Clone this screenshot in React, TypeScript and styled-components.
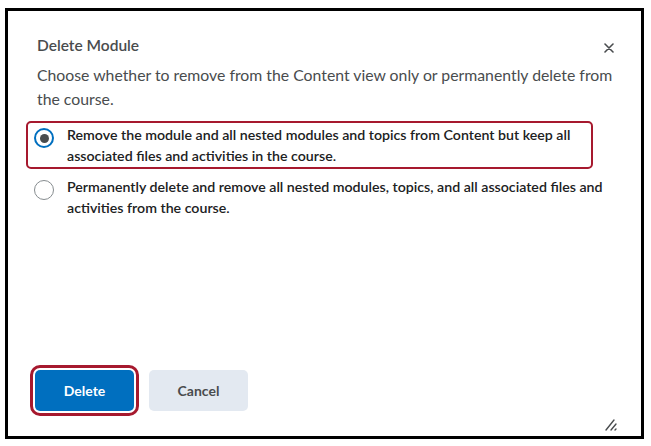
import styled, { createGlobalStyle } from 'styled-components';
import { useState } from 'react';

const GlobalStyle = createGlobalStyle`
    html, body {
        margin: 0;
        padding: 0;
        background: #ffffff;
    }
    body {
        font-family: Lato, "Noto Sans", sans-serif;
    }
`;

const Frame = styled.div`
    box-sizing: border-box;
    width: 639px;
    height: 431px;
    margin: 8px 0 0 5px;
    border: 3px solid #000000;
    background: #ffffff;
    display: flex;
    flex-direction: column;
`;

const Body = styled.div`
    padding: 24px 24px 0 29px;
`;

const Header = styled.div`
    display: flex;
    justify-content: space-between;
    align-items: flex-start;
`;

const Title = styled.h2`
    margin: 0;
    font-size: 15.5px;
    line-height: 20px;
    font-weight: 600;
    color: #494c4e;
`;

const CloseButton = styled.button`
    border: 0;
    background: none;
    padding: 0;
    margin: 8px 3px 0 0;
    width: 10px;
    height: 10px;
    display: flex;
    cursor: pointer;
`;

const Description = styled.p`
    margin: 8px 0 0 0;
    font-size: 15.8px;
    line-height: 24px;
    color: #494c4e;
`;

const Options = styled.div`
    display: flex;
    flex-direction: column;
    gap: 4px;
    margin: 10px 0 0 -11px;
`;

const OptionRow = styled.label<{ $highlighted?: boolean }>`
    box-sizing: border-box;
    width: 567px;
    display: flex;
    align-items: flex-start;
    gap: 13px;
    padding: 1px 6px;
    border: 2px solid ${p => (p.$highlighted ? '#a6192e' : 'transparent')};
    border-radius: 5px;
    cursor: pointer;
`;

const Radio = styled.span<{ $checked?: boolean }>`
    box-sizing: border-box;
    flex: none;
    width: 20px;
    height: 20px;
    margin-top: 4px;
    border-radius: 50%;
    border: ${p => (p.$checked ? '2px solid #006fbf' : '1px solid #868c8f')};
    background: #ffffff;
    display: flex;
    align-items: center;
    justify-content: center;

    &::after {
        content: '';
        display: ${p => (p.$checked ? 'block' : 'none')};
        width: 9px;
        height: 9px;
        border-radius: 50%;
        background: #494c4e;
    }
`;

const OptionText = styled.span`
    flex: none;
    width: 542px;
    font-size: 14.2px;
    line-height: 21px;
    font-weight: 600;
    color: #202122;
`;

const Footer = styled.div`
    margin-top: auto;
    display: flex;
    align-items: flex-end;
    padding: 0 23px 4px 27px;
`;

const Buttons = styled.div`
    display: flex;
    gap: 15px;
    margin-bottom: 21px;
`;

const Button = styled.button<{ $primary?: boolean; $highlighted?: boolean }>`
    width: 99px;
    height: 41px;
    border: 0;
    border-radius: 5px;
    font-family: Lato, "Noto Sans", sans-serif;
    font-size: 14px;
    font-weight: 700;
    color: ${p => (p.$primary ? '#ffffff' : '#494c4e')};
    background: ${p => (p.$primary ? '#006fbf' : '#e3e9f1')};
    outline: ${p => (p.$highlighted ? '3px solid #a6192e' : 'none')};
    outline-offset: 2px;
    cursor: pointer;
`;

const Grip = styled.div`
    margin-left: auto;
    width: 14px;
    height: 14px;
    display: flex;
`;

const options = [
    'Remove the module and all nested modules and topics from Content but keep all associated files and activities in the course.',
    'Permanently delete and remove all nested modules, topics, and all associated files and activities from the course.',
];

const App = () => {
    const [selected, setSelected] = useState(0);

    return (
        <>
            <GlobalStyle />
            <Frame>
                <Body>
                    <Header>
                        <Title>Delete Module</Title>
                        <CloseButton aria-label="Close">
                            <svg width="10" height="10" viewBox="0 0 10 10">
                                <path d="M1 1L9 9M9 1L1 9" stroke="#494c4e" strokeWidth="1.6" strokeLinecap="round" />
                            </svg>
                        </CloseButton>
                    </Header>
                    <Description>
                        Choose whether to remove from the Content view only or permanently delete from the course.
                    </Description>
                    <Options>
                        {options.map((text, i) => (
                            <OptionRow key={i} $highlighted={i === 0} onClick={() => setSelected(i)}>
                                <Radio $checked={selected === i} />
                                <OptionText>{text}</OptionText>
                            </OptionRow>
                        ))}
                    </Options>
                </Body>
                <Footer>
                    <Buttons>
                        <Button $primary $highlighted>Delete</Button>
                        <Button>Cancel</Button>
                    </Buttons>
                    <Grip>
                        <svg width="14" height="14" viewBox="0 0 14 14">
                            <path d="M2 12L10 2M7 12L12 6M11 12L12 11" stroke="#494c4e" strokeWidth="1.4" strokeLinecap="round" />
                        </svg>
                    </Grip>
                </Footer>
            </Frame>
        </>
    );
};

export default App;
